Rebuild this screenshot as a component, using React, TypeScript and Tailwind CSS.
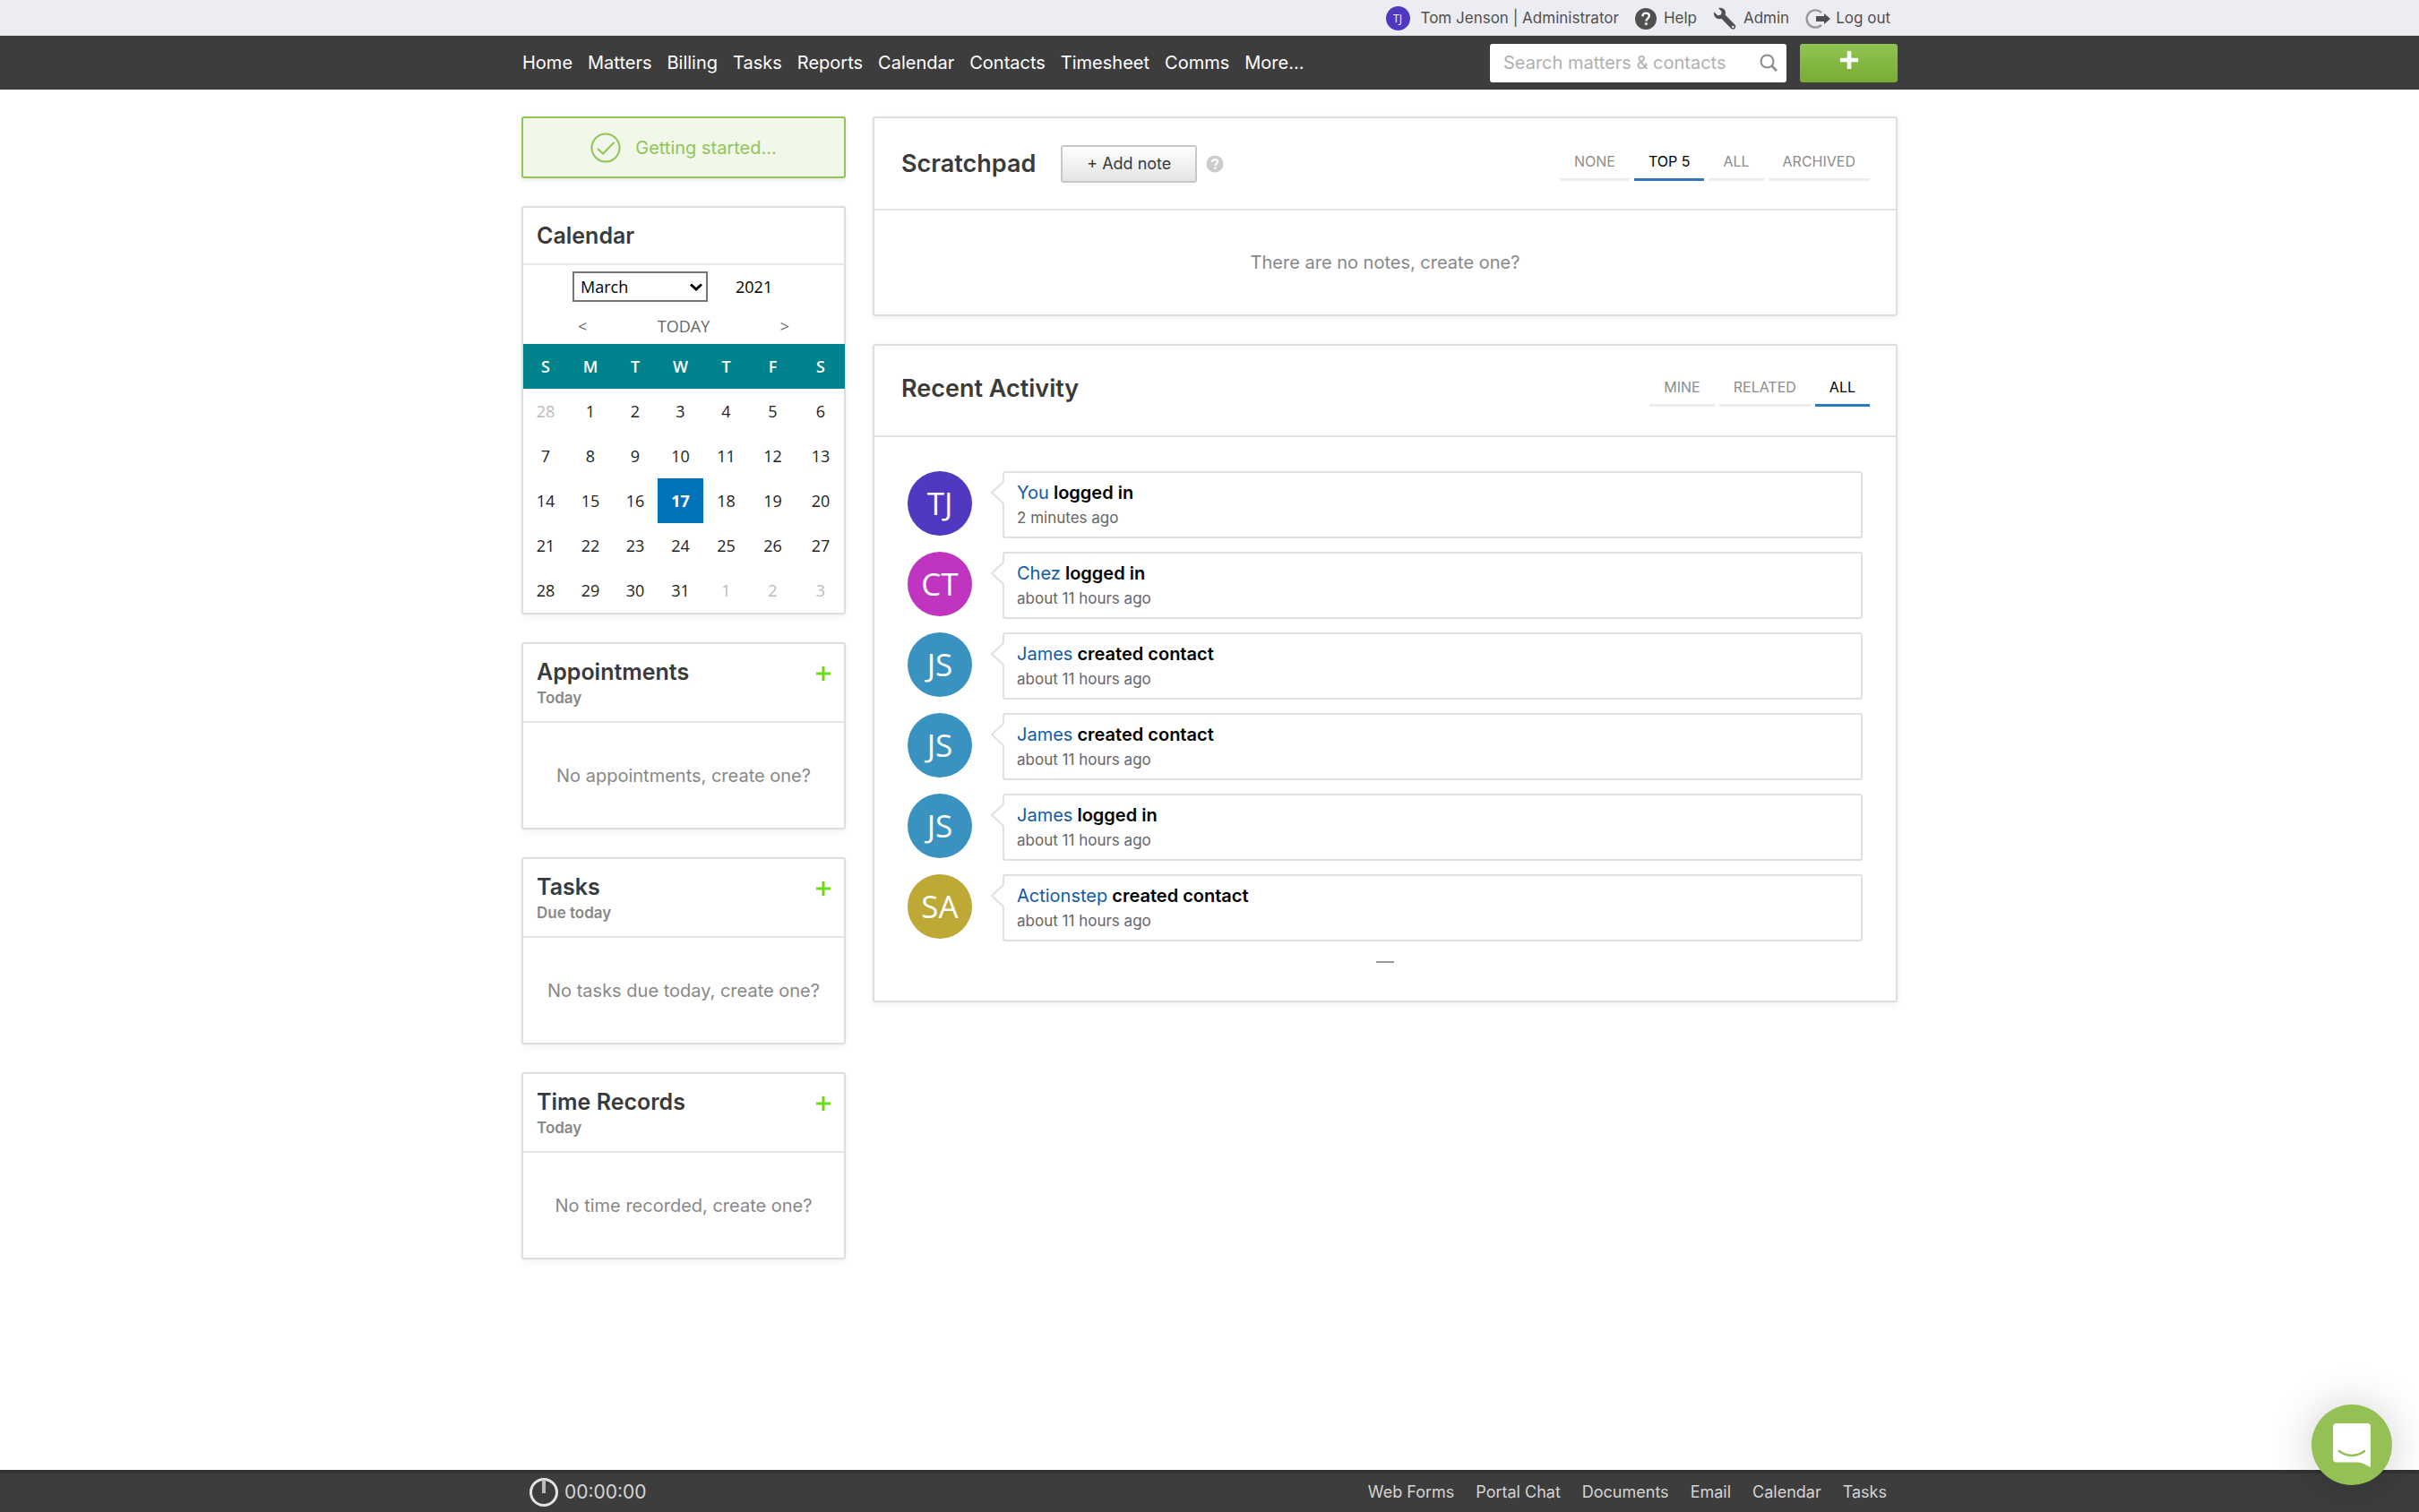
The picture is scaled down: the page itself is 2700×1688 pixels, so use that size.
import { ReactNode } from "react";

interface TabsProps {
  label: string;
  items: string[];
  active: string;
}

interface SideCardProps {
  title: string;
  subtitle: string;
  empty: string;
}

interface Activity {
  initials: string;
  color: string;
  who: string;
  action: string;
  when: string;
}

const navLinks = [
  "Home",
  "Matters",
  "Billing",
  "Tasks",
  "Reports",
  "Calendar",
  "Contacts",
  "Timesheet",
  "Comms",
  "More...",
];

const footerLinks = ["Web Forms", "Portal Chat", "Documents", "Email", "Calendar", "Tasks"];

const weekDays = ["S", "M", "T", "W", "T", "F", "S"];

const columnWidths = ["w-[50px]", "w-[50px]", "w-[50px]", "w-[51px]", "w-[51px]", "w-[53px]", "w-[54px]"];

const weeks = [
  [28, 1, 2, 3, 4, 5, 6],
  [7, 8, 9, 10, 11, 12, 13],
  [14, 15, 16, 17, 18, 19, 20],
  [21, 22, 23, 24, 25, 26, 27],
  [28, 29, 30, 31, 1, 2, 3],
];

const months = [
  "January",
  "February",
  "March",
  "April",
  "May",
  "June",
  "July",
  "August",
  "September",
  "October",
  "November",
  "December",
];

const activities: Activity[] = [
  { initials: "TJ", color: "bg-[#5038c0]", who: "You", action: "logged in", when: "2 minutes ago" },
  { initials: "CT", color: "bg-[#c035c0]", who: "Chez", action: "logged in", when: "about 11 hours ago" },
  { initials: "JS", color: "bg-[#3a92c0]", who: "James", action: "created contact", when: "about 11 hours ago" },
  { initials: "JS", color: "bg-[#3a92c0]", who: "James", action: "created contact", when: "about 11 hours ago" },
  { initials: "JS", color: "bg-[#3a92c0]", who: "James", action: "logged in", when: "about 11 hours ago" },
  { initials: "SA", color: "bg-[#bea836]", who: "Actionstep", action: "created contact", when: "about 11 hours ago" },
];

function Card({ children }: { children: ReactNode }) {
  return (
    <section className="rounded-[3px] border-2 border-[#dedede] bg-white shadow-[0_2px_6px_rgba(0,0,0,0.07)]">
      {children}
    </section>
  );
}

function TopBar() {
  return (
    <div className="border-b border-[#d8d8d8] bg-[#ecedf2]">
      <div className="mx-auto flex h-[39px] w-full max-w-[1536px] items-center justify-end pt-0.5 pr-2 text-[17px] text-[#505050]">
        <span className="mr-3 flex size-[27px] items-center justify-center rounded-full bg-[#5038c0] font-['Open_Sans',sans-serif] text-xs text-white">
          TJ
        </span>
        <a href="#profile" className="mr-[18px]">
          Tom Jenson | Administrator
        </a>
        <a href="#help" className="mr-[18px] flex items-center gap-2">
          <svg viewBox="0 0 24 24" className="size-6">
            <circle cx="12" cy="12" r="12" fill="#505050" />
            <path
              d="M8.3 9.2c.1-2.2 1.6-3.6 3.8-3.6s3.7 1.3 3.7 3.2c0 2.7-3.3 2.9-3.3 5.6"
              fill="none"
              stroke="#fff"
              strokeWidth="2.4"
            />
            <circle cx="12.4" cy="17.6" r="1.6" fill="#fff" />
          </svg>
          Help
        </a>
        <a href="#admin" className="mr-[18px] flex items-center gap-2">
          <svg viewBox="0 0 26 26" className="size-[26px]" fill="#505050">
            <path d="M6 1c4-1.3 8 1.2 8 5.2 0 .8-.1 1.5-.4 2.2l10.8 11c1.2 1.2 1.2 3.1.1 4.3-1.2 1.2-3.1 1.2-4.3 0L9.4 12.800c-4 1.400-8.200-1-8.500-5.500 0-.7 0-1.300.2-1.900l4.200 3.900 3.600-.8.800-3.500zm16.300 19.700a1.300 1.300 0 1 0 0 2.600 1.300 1.300 0 0 0 0-2.600z" />
          </svg>
          Admin
        </a>
        <a href="#logout" className="flex items-center gap-1.5">
          <svg viewBox="0 0 28 24" className="h-6 w-7">
            <path d="M18 5.2a9.6 9.6 0 1 0 0 13.6" fill="none" stroke="#999" strokeWidth="2.4" />
            <path d="M12 9h9V6l7 6-7 6v-3h-9z" fill="#505050" />
          </svg>
          Log out
        </a>
      </div>
    </div>
  );
}

function NavBar() {
  return (
    <header className="bg-[#3d3d3d]">
      <div className="mx-auto flex h-[60px] w-full max-w-[1536px] items-center justify-between">
        <nav className="flex gap-[17px] pl-px text-xl text-white">
          {navLinks.map((link) => (
            <a key={link} href={`#${link}`}>
              {link}
            </a>
          ))}
        </nav>
        <div className="flex gap-[15px]">
          <label className="flex h-[43px] w-[331px] items-center rounded-[3px] bg-white pr-2.5 pl-[15px]">
            <input
              type="text"
              aria-label="Search matters and contacts"
              placeholder="Search matters & contacts"
              className="min-w-0 flex-1 text-xl outline-none placeholder:text-[#b0b0b0]"
            />
            <svg viewBox="0 0 20 20" className="size-5" fill="none" stroke="#8c8c8c" strokeWidth="2">
              <circle cx="8.5" cy="8.5" r="7" />
              <path d="M13.5 13.5l5.5 5.5" strokeWidth="2.6" />
            </svg>
          </label>
          <button
            aria-label="Create"
            className="flex h-[43px] w-[109px] justify-center rounded-[3px] bg-linear-to-b from-[#8fc551] to-[#79ac36] pt-2"
          >
            <svg viewBox="0 0 20 20" className="size-5" fill="none" stroke="#fff" strokeWidth="4.6">
              <path d="M10 0v20M0 10h20" />
            </svg>
          </button>
        </div>
      </div>
    </header>
  );
}

function CalendarCard() {
  return (
    <Card>
      <h2 className="border-b-2 border-[#e8e8e8] px-[15px] py-[15px] text-[25px] leading-8 font-semibold text-[#3a3a3a]">
        Calendar
      </h2>
      <div className="font-['Open_Sans',sans-serif] text-lg">
        <div className="flex items-center pt-[7px] pl-[55px]">
          <div className="relative">
            <select
              aria-label="Month"
              defaultValue="March"
              className="h-[34px] w-[151px] appearance-none border-2 border-[#767676] bg-white pl-[7px] text-black"
            >
              {months.map((month) => (
                <option key={month}>{month}</option>
              ))}
            </select>
            <svg
              viewBox="0 0 14 9"
              className="pointer-events-none absolute top-[13px] right-1.5 h-[9px] w-3.5"
              fill="none"
              stroke="#000"
              strokeWidth="3"
            >
              <path d="M1 1.5l6 5.5 6-5.5" />
            </svg>
          </div>
          <input aria-label="Year" defaultValue="2021" className="ml-[31px] w-16 text-black outline-none" />
        </div>
        <div className="flex h-[47px] items-center justify-between px-[61px] pt-1.5 text-[#666]">
          <button aria-label="Previous month">&lt;</button>
          <button>TODAY</button>
          <button aria-label="Next month">&gt;</button>
        </div>
        <table className="w-full table-fixed text-center text-[#222]">
          <thead className="bg-[#00838c] text-white">
            <tr>
              {weekDays.map((day, i) => (
                <th key={i} className={`h-[50px] font-semibold ${columnWidths[i]}`}>
                  {day}
                </th>
              ))}
            </tr>
          </thead>
          <tbody>
            {weeks.map((week, row) => (
              <tr key={row}>
                {week.map((day, i) => {
                  const outside = (row === 0 && day > 7) || (row === 4 && day < 7);
                  const today = day === 17;
                  return (
                    <td
                      key={i}
                      className={`h-[50px] ${today ? "bg-[#0072bc] font-bold text-white" : ""} ${
                        outside ? "text-[#bbb]" : ""
                      }`}
                    >
                      {day}
                    </td>
                  );
                })}
              </tr>
            ))}
          </tbody>
        </table>
      </div>
    </Card>
  );
}

function SideCard({ title, subtitle, empty }: SideCardProps) {
  return (
    <Card>
      <div className="flex items-start justify-between border-b-2 border-[#e4e4e4] px-[15px] pt-[15px] pb-[13px]">
        <div>
          <h2 className="text-[25px] leading-8 font-semibold text-[#3a3a3a]">{title}</h2>
          <p className="text-[17px] leading-[26px] font-semibold text-[#888]">{subtitle}</p>
        </div>
        <button aria-label={`Add to ${title}`} className="pt-2.5">
          <svg viewBox="0 0 16 16" className="size-4" fill="none" stroke="#6bdb12" strokeWidth="3">
            <path d="M8 0v16M0 8h16" />
          </svg>
        </button>
      </div>
      <p className="pt-[45px] pb-11 text-center text-xl leading-7 text-[#888]">{empty}</p>
    </Card>
  );
}

function Tabs({ label, items, active }: TabsProps) {
  return (
    <nav aria-label={label} className="flex gap-[5px] text-base leading-6">
      {items.map((item) => (
        <button
          key={item}
          className={
            item === active
              ? "border-b-3 border-[#2f78bd] px-4 pb-[7px] text-black"
              : "border-b-3 border-[#ededed] px-4 pb-[7px] text-[#8c8c8c]"
          }
        >
          {item}
        </button>
      ))}
    </nav>
  );
}

function Scratchpad() {
  return (
    <Card>
      <div className="flex h-[103px] items-center border-b-2 border-[#e4e4e4] pr-[29px] pl-[30px]">
        <h2 className="mr-7 text-[27px] leading-8 font-semibold text-[#3a3a3a]">Scratchpad</h2>
        <button className="h-[42px] w-[152px] rounded-[3px] border-2 border-[#c8c8c8] bg-linear-to-b from-white to-[#e4e4e4] text-lg text-[#3a3a3a]">
          + Add note
        </button>
        <svg viewBox="0 0 20 20" className="ml-2.5 size-5">
          <circle cx="10" cy="10" r="9.5" fill="#ccc" />
          <path
            d="M7 8c.1-1.8 1.3-3 3.1-3s3 1.1 3 2.6c0 2.2-2.7 2.3-2.7 4.5"
            fill="none"
            stroke="#fff"
            strokeWidth="2"
          />
          <circle cx="10.3" cy="14.6" r="1.3" fill="#fff" />
        </svg>
        <div className="ml-auto pt-1">
          <Tabs label="Scratchpad filter" items={["NONE", "TOP 5", "ALL", "ARCHIVED"]} active="TOP 5" />
        </div>
      </div>
      <p className="py-11 text-center text-xl leading-7 text-[#888]">There are no notes, create one?</p>
    </Card>
  );
}

function ActivityRow({ activity }: { activity: Activity }) {
  return (
    <li className="flex items-start">
      <span
        className={`flex size-[72px] shrink-0 items-center justify-center rounded-full font-['Open_Sans',sans-serif] text-[35px] text-white ${activity.color}`}
      >
        {activity.initials}
      </span>
      <div className="relative ml-[34px] h-[75px] flex-1 rounded-[3px] border-2 border-[#e0e0e0] px-3.5 pt-2">
        <svg viewBox="0 0 16 28" className="absolute top-2 -left-4 h-7 w-4">
          <path d="M16 1L2 14l14 13" fill="#fff" stroke="#e0e0e0" strokeWidth="2" />
        </svg>
        <p className="text-xl leading-7 font-semibold text-black">
          <a href={`#${activity.who}`} className="font-normal text-[#0f5ba8]">
            {activity.who}
          </a>{" "}
          {activity.action}
        </p>
        <p className="text-[17px] leading-7 text-[#666]">{activity.when}</p>
      </div>
    </li>
  );
}

function RecentActivity() {
  return (
    <Card>
      <div className="flex h-[102px] items-center justify-between border-b-2 border-[#e4e4e4] pr-[29px] pl-[30px]">
        <h2 className="pb-1 text-[27px] leading-8 font-semibold text-[#3a3a3a]">Recent Activity</h2>
        <div className="pt-0.5">
          <Tabs label="Activity filter" items={["MINE", "RELATED", "ALL"]} active="ALL" />
        </div>
      </div>
      <ul className="flex flex-col gap-[15px] px-[37px] pt-[38px]">
        {activities.map((activity, i) => (
          <ActivityRow key={i} activity={activity} />
        ))}
      </ul>
      <hr className="mx-auto mt-[22px] mb-[42px] w-5 border-t-2 border-[#999]" />
    </Card>
  );
}

function Footer() {
  return (
    <footer className="border-t-4 border-[#333] bg-[#3d3d3d] text-[#d4d4d4]">
      <div className="mx-auto flex h-[43px] w-full max-w-[1536px] items-center justify-between pr-3 pb-px pl-[9px]">
        <button className="flex items-center gap-[7px] text-[21px]">
          <svg viewBox="0 0 32 32" className="size-8" fill="none" stroke="#e4e4e4" strokeWidth="3">
            <circle cx="16" cy="16" r="14.5" />
            <path d="M16 2v15" stroke="#bbb" strokeWidth="4" />
          </svg>
          00:00:00
        </button>
        <nav className="flex gap-6 text-lg">
          {footerLinks.map((link) => (
            <a key={link} href={`#${link}`}>
              {link}
            </a>
          ))}
        </nav>
      </div>
    </footer>
  );
}

function ChatLauncher() {
  return (
    <button
      aria-label="Open chat"
      className="fixed right-[30px] bottom-[30px] flex size-[90px] items-center justify-center rounded-full bg-[#94c056] shadow-[0_2px_50px_rgba(0,0,0,0.2)]"
    >
      <svg viewBox="0 0 42 49" className="h-[49px] w-[42px]">
        <path d="M4 0h34a4 4 0 0 1 4 4v45c-5-2.5-9-5-14-5.5H4a4 4 0 0 1-4-4V4a4 4 0 0 1 4-4z" fill="#fff" />
        <path d="M7 31c8 6.5 20 6.5 28 0" fill="none" stroke="#94c056" strokeWidth="2.5" strokeLinecap="round" />
      </svg>
    </button>
  );
}

function App() {
  return (
    <div className="flex min-h-screen flex-col bg-white font-['Inter',sans-serif]">
      <TopBar />
      <NavBar />
      <main className="mx-auto flex w-full max-w-[1536px] flex-1 items-start gap-[30px] pt-[30px]">
        <div className="flex w-[362px] shrink-0 flex-col gap-[31px]">
          <button className="flex h-[69px] items-center justify-center gap-4 rounded-[3px] border-2 border-[#92c458] bg-[#f1f8ea] text-xl text-[#92c458] shadow-[0_2px_6px_rgba(0,0,0,0.1)]">
            <svg viewBox="0 0 34 34" className="size-[34px]" fill="none" stroke="#92c458" strokeWidth="2">
              <circle cx="17" cy="17" r="15.5" />
              <path d="M8 18l6 5.5L26.5 11" />
            </svg>
            Getting started...
          </button>
          <CalendarCard />
          <SideCard title="Appointments" subtitle="Today" empty="No appointments, create one?" />
          <SideCard title="Tasks" subtitle="Due today" empty="No tasks due today, create one?" />
          <SideCard title="Time Records" subtitle="Today" empty="No time recorded, create one?" />
        </div>
        <div className="flex min-w-0 flex-1 flex-col gap-[31px]">
          <Scratchpad />
          <RecentActivity />
        </div>
      </main>
      <Footer />
      <ChatLauncher />
    </div>
  );
}

export default App;
